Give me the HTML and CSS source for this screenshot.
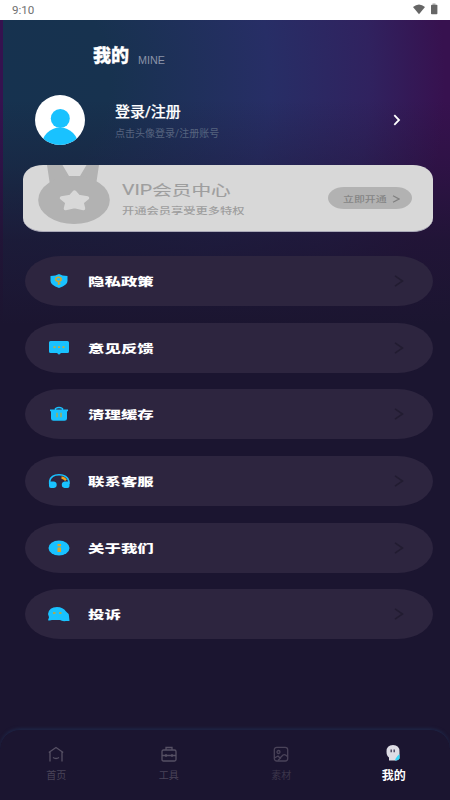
FILE: index.html
```html
<!DOCTYPE html>
<html lang="zh-CN">
<head>
<meta charset="utf-8">
<title>我的</title>
<link rel="stylesheet" href="styles.css">
</head>
<body>
<div class="status">
  <span class="time">9:10</span>
  <svg class="signals" width="28" height="14" viewBox="0 0 28 14"><path d="M1 4Q7-1 13 4L7 11.300Z" fill="#666"/><path d="M20.500.3h3v2h-3Z" fill="#bbb"/><rect x="19" y="1.800" width="6.400" height="9.400" rx=".8" fill="#666"/></svg>
</div>
<main class="page">
  <header class="heading"><h1>我的</h1><span class="mine">MINE</span></header>
  <section class="profile">
    <svg class="avatar" width="50" height="50" viewBox="0 0 50 50"><defs><clipPath id="face"><circle cx="25" cy="25" r="25"/></clipPath></defs><circle cx="25" cy="25" r="25" fill="#fff"/><g fill="#19c2ff" clip-path="url(#face)"><circle cx="25.300" cy="23.500" r="9.500"/><ellipse cx="25" cy="51.500" rx="18.500" ry="19"/></g></svg>
    <div class="login"><strong>登录/注册</strong><span>点击头像登录/注册账号</span></div>
    <svg class="go" width="8" height="12" viewBox="0 0 8 12"><path d="M1.300 1.200 6 6 1.300 10.800" fill="none" stroke="#fff" stroke-width="1.800"/></svg>
  </section>
  <section class="vip">
    <svg class="medal" width="72" height="67" viewBox="0 0 72 67"><g fill="#b2b2b2"><path d="M9 0h15.500L31 11h11L48.500 0H61L58 20H12Z"/><ellipse cx="36" cy="35" rx="35.800" ry="24"/></g><path d="M36.500 27 40.500 31.500 49.500 33 44 37.500 45.500 43.500 36.500 41.500 27.500 43.500 29 37.500 23.500 33 32.500 31.500Z" fill="#d8d8d8" stroke="#d8d8d8" stroke-width="3.500" stroke-linejoin="round"/></svg>
    <div class="vip-copy"><strong>VIP会员中心</strong><span>开通会员享受更多特权</span></div>
    <div class="open"><span>立即开通</span><svg width="8" height="8" viewBox="0 0 8 8"><path d="M1 .8 7 4 1 7.200" fill="none" stroke="#808080" stroke-width="1.200"/></svg></div>
  </section>
  <nav class="menu">
    <div class="row"><svg class="icon" viewBox="0 0 24 16"><path d="M12 1Q15 2.800 20.500 3v5q0 4-8.500 7Q3.500 12 3.500 8V3Q9 2.800 12 1Z" fill="#19c2ff"/><g fill="none" stroke="#d6a72b" stroke-width="1.500"><ellipse cx="11.500" cy="6.300" rx="2.700" ry="2"/><path d="M11.500 8.300V12M11.500 10.500h2"/></g></svg><span>隐私政策</span><svg class="chevron" viewBox="0 0 10 12"><path d="M1 .8 8.500 6 1 11.200"/></svg></div>
    <div class="row"><svg class="icon" viewBox="0 0 24 16"><path d="M3.500 1h17Q22 1 22 2.500v9Q22 13 20.500 13H14l-2 1.800L10 13H3.500Q2 13 2 11.500v-9Q2 1 3.500 1Z" fill="#19c2ff"/><path d="M6.500 7.200h2M11 7.200h2M15.500 7.200h2" stroke="#c5ae3b" stroke-width="1.800"/></svg><span>意见反馈</span><svg class="chevron" viewBox="0 0 10 12"><path d="M1 .8 8.500 6 1 11.200"/></svg></div>
    <div class="row"><svg class="icon" viewBox="0 0 24 16"><path d="M8.500 4V2.500Q12 .5 15.500 2.500V4" fill="none" stroke="#19c2ff" stroke-width="1.400"/><path d="M3 3.500h18V5l-1 .5v7Q20 14.800 17.500 14.800h-11Q4 14.800 4 12.500v-7L3 5Z" fill="#19c2ff"/><path d="M10 6.800v4.500M14 6.800v4.500" stroke="#a7ad56" stroke-width="1.500"/></svg><span>清理缓存</span><svg class="chevron" viewBox="0 0 10 12"><path d="M1 .8 8.500 6 1 11.200"/></svg></div>
    <div class="row"><svg class="icon" viewBox="0 0 24 16"><path d="M2.700 11V8Q4 1.800 12 1.800T21.800 8v3" fill="none" stroke="#19c2ff" stroke-width="1.600"/><path d="M2 8.500h5q2.700.5 2.700 3.200T7 14.900H4Q2 14.900 2 13ZM22.500 8.500h-5q-2.700.5-2.700 3.200t2.700 3.200h3q2 0 2-1.900Z" fill="#19c2ff"/><path d="M14.500 4.500Q17 4.700 19 7.200" stroke="#f2a51a" stroke-width="2.400" fill="none"/></svg><span>联系客服</span><svg class="chevron" viewBox="0 0 10 12"><path d="M1 .8 8.500 6 1 11.200"/></svg></div>
    <div class="row"><svg class="icon" viewBox="0 0 24 16"><ellipse cx="12" cy="8" rx="10.500" ry="7.400" fill="#19c2ff"/><path d="M10.500 4h3.500v2.200h-3.500ZM10.500 7.500H14V12h-3.500Z" fill="#dca52a"/></svg><span>关于我们</span><svg class="chevron" viewBox="0 0 10 12"><path d="M1 .8 8.500 6 1 11.200"/></svg></div>
    <div class="row"><svg class="icon" viewBox="0 0 24 16"><path d="M1 8Q2 1 10 1q6 0 9 4.500 3 2 3 4.500l.5 5h-3.500q-4 .5-6-1H5q-2 .8-4 .2l1-3Z" fill="#19c2ff"/><path d="M6 7h2.500M12 7h2.500" stroke="#a9a958" stroke-width="2"/></svg><span>投诉</span><svg class="chevron" viewBox="0 0 10 12"><path d="M1 .8 8.500 6 1 11.200"/></svg></div>
  </nav>
</main>
<nav class="tabs">
  <div class="tab"><svg viewBox="0 0 18 18"><path d="M1.800 6.500 9 1.500l7.200 5M3 6v9.500M15 6v9.500M6 11.500q3 2 6 0" /></svg><span>首页</span></div>
  <div class="tab"><svg viewBox="0 0 18 18"><path d="M6 4V1.500h6V4M3.500 4h11Q16 4 16 5.500v8Q16 15 14.500 15h-11Q2 15 2 13.500v-8Q2 4 3.500 4ZM2 9.500h14M6 8v3M12 8v3"/></svg><span>工具</span></div>
  <div class="tab dim"><svg viewBox="0 0 18 18"><rect x="2.300" y="1.300" width="13.400" height="13.700" rx="2.500"/><circle cx="6.500" cy="6" r="1.500"/><path d="M2.500 12 6 10l2 2 3-3q2-1 4.500 1.500M6 14.500l3-3"/></svg><span>素材</span></div>
  <div class="tab active"><svg viewBox="0 0 18 18"><path class="ghost" d="M9 0Q15.500 0 15.500 6.500v7Q14 16 11 15.500H5V12.500Q2.500 11 2.500 6.500 2.500 0 9 0Z"/><path class="glow" d="M15.500 9v4.500Q14 16 11 15.500q.5-3 4.500-6.500Z"/><path class="eyes" d="M7.200 4.500v2.700M10.200 4.500v2.700"/></svg><span>我的</span></div>
</nav>
</body>
</html>
```

FILE: styles.css
```css
* { box-sizing: border-box; }
body {
  margin: 0;
  width: 450px;
  height: 800px;
  display: flex;
  flex-direction: column;
  overflow: hidden;
  background: #1b1530;
  font-family: Roboto, "Noto Sans CJK SC", sans-serif;
}
svg { display: block; flex: none; }
.status {
  height: 20px;
  flex: none;
  display: flex;
  justify-content: space-between;
  padding: 3px 10px 0 12px;
  background: #fff;
  color: #707070;
}
.time { font-size: 11.6px; line-height: 14px; }
.page {
  flex: 1;
  min-height: 0;
  background:
    linear-gradient(180deg, rgba(27,21,48,0) 80px, rgba(27,21,48,.3) 145px, rgba(27,21,48,.78) 220px, #1b1530 305px),
    linear-gradient(90deg, #35124f 3px, transparent 3px),
    radial-gradient(circle at 0 60px, #16324f 0, #17324f 110px, #272e66 270px, #30225f 370px, #37114f 445px);
}
.heading {
  display: flex;
  align-items: flex-end;
  height: 49px;
  padding-left: 93px;
  color: #fff;
}
h1 { margin: 0 9px -1px 0; font-size: 18px; line-height: 28px; font-weight: 900; -webkit-text-stroke: .3px #fff; }
.mine { color: #8b93a8; font: 10.8px/18px "Liberation Sans", sans-serif; }
.profile {
  display: flex;
  align-items: center;
  height: 50px;
  margin: 26px 49px 0 35px;
}
.go { margin-right: 0; }
.login { display: flex; flex-direction: column; flex: 1; margin: 5px 0 0 30px; }
.login strong { color: #fff; font-size: 15px; line-height: 21px; font-weight: 500; -webkit-text-stroke: .2px #fff; }
.login span { color: #56647f; font-size: 10px; line-height: 20px; margin-top: 1px; }
.vip {
  display: flex;
  height: 67px;
  margin: 20px 17px 0 23px;
  padding: 0 21px 0 15px;
  border-radius: 20px / 14px;
  background: #d8d8d8;
  border-bottom: 1px solid #aaa9b8;
  overflow: hidden;
}
.vip-copy { display: flex; flex-direction: column; flex: 1; padding: 14px 0 0 12px; color: #9e9e9e; }
.vip-copy strong, .vip-copy span { width: max-content; transform-origin: left center; font-weight: 500; white-space: nowrap; }
.vip-copy strong { font-size: 14px; line-height: 22px; transform: scaleX(1.4); font-weight: 400; -webkit-text-stroke: .15px #9e9e9e; }
.vip-copy span { font-size: 9px; line-height: 16px; margin-top: 2px; transform: scale(1.36, .95); }
.open {
  width: 84px;
  height: 22px;
  margin-top: 22px;
  padding: 1px 12px 0 15px;
  display: flex;
  align-items: center;
  justify-content: space-between;
  border-radius: 16px / 11px;
  background: #b2b2b2;
  color: #858585;
  font-size: 8px;
  font-weight: 500;
}
.open span { transform: scaleX(1.36); transform-origin: left center; white-space: nowrap; }
.menu { display: flex; flex-direction: column; gap: 16.7px; margin: 24px 17px 0 25px; }
.row {
  display: flex;
  align-items: center;
  height: 50px;
  padding: 0 29px 0 22px;
  background: #2d253f;
  border-radius: 35px / 25px;
}
.icon { width: 24px; height: 16px; }
.row span {
  margin: 2px 0 0 17px;
  color: #fff;
  font-size: 12px;
  line-height: 18px;
  font-weight: 900;
  transform: scale(1.37, .95);
  transform-origin: left center;
}
.chevron { width: 10px; height: 12px; margin-left: auto; fill: none; stroke: #221c31; stroke-width: 1.6; }
.tabs {
  height: 71px;
  flex: none;
  display: grid;
  grid-template-columns: repeat(4, 1fr);
  border-top: 1px solid #1d2140;
  border-radius: 20px 20px 0 0;
  background: #1b1530;
  box-shadow: 0 -1px 3px #1e2443;
}
.tab { display: flex; flex-direction: column; align-items: center; padding-top: 16px; color: #4a4459; }
.tab svg { width: 18px; height: 18px; fill: none; stroke: #565064; stroke-width: 1.3; }
.tab span { font-size: 10px; line-height: 16px; margin-top: 4px; }
.dim { color: #3c354b; }
.dim svg { stroke: #4a4359; }
.active { color: #fff; padding-top: 15px; }
.active svg { margin-left: -1px; }
.active span { font-size: 12px; line-height: 18px; font-weight: 700; }
.tab .ghost { fill: #dedde5; stroke: none; }
.tab .glow { fill: #35d5f5; stroke: none; }
.tab .eyes { stroke: #45405a; stroke-width: 1.4; }
```
